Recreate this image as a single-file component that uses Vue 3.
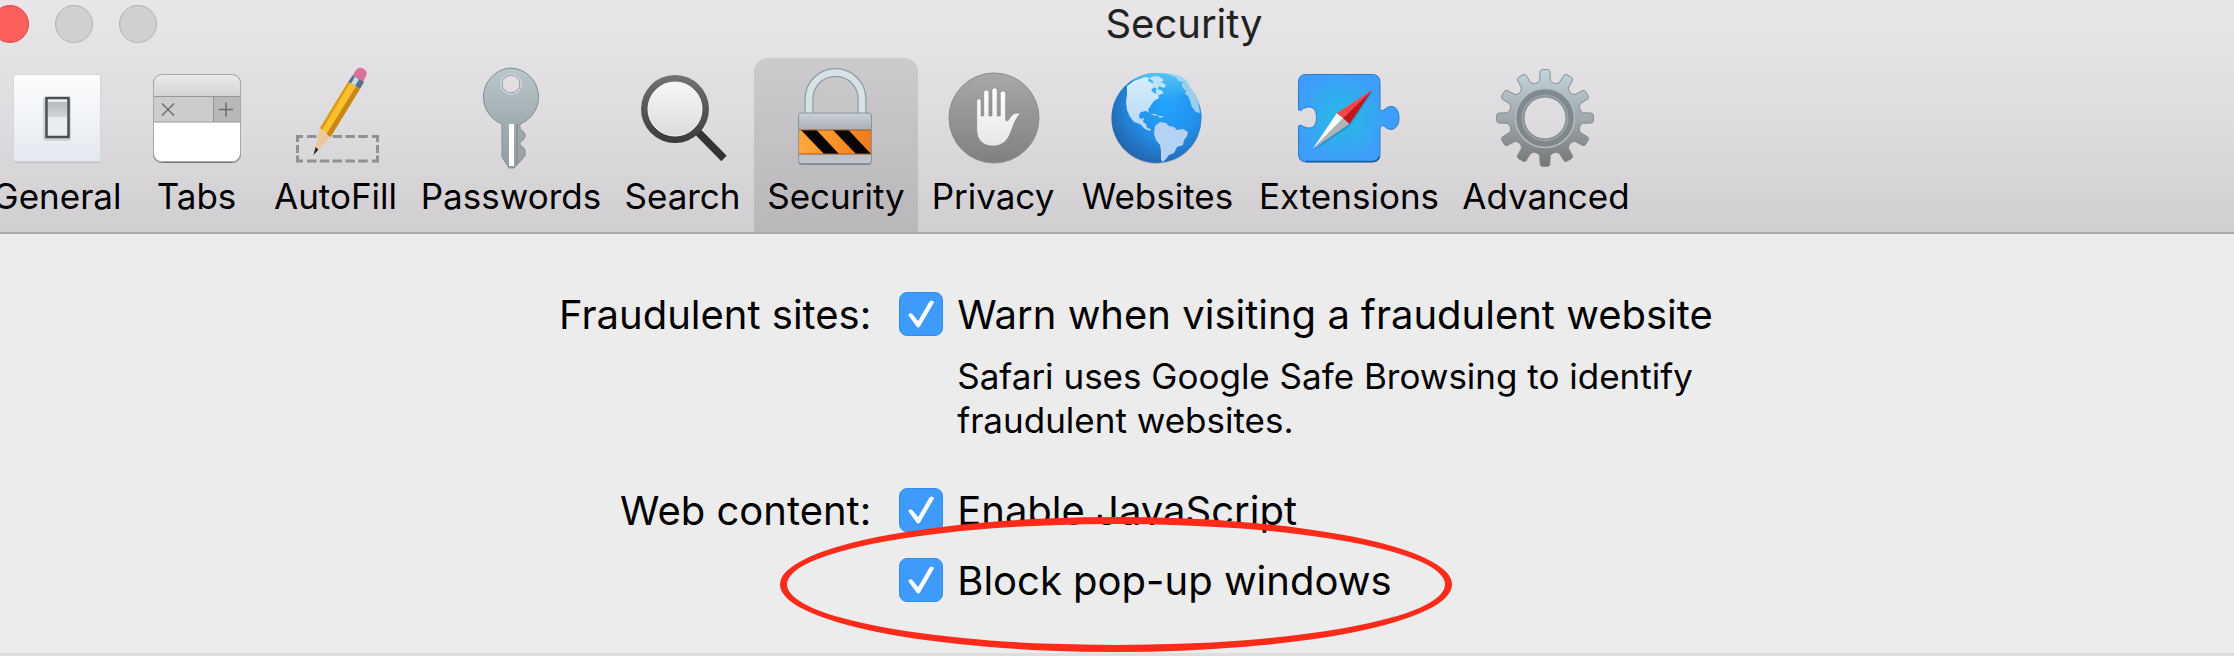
<template>
  <div class="screen">
    <div class="window">
      <header class="header">
        <div class="title-bar">
          <div class="lights">
            <button class="light close" aria-label="Close"></button>
            <button class="light" aria-label="Minimize"></button>
            <button class="light" aria-label="Zoom"></button>
          </div>
          <h1 class="title">{{ current }}</h1>
          <div></div>
        </div>

        <nav class="toolbar">
          <button
            v-for="tab in tabs"
            :key="tab"
            class="tab"
            :class="{ active: tab === current }"
            @click="current = tab"
          >
            <svg v-if="tab === 'General'" class="icon" viewBox="0 0 104 104">
              <defs>
                <linearGradient id="plate" x1="0" y1="0" x2="0" y2="1">
                  <stop offset="0" stop-color="#fdfdfe" />
                  <stop offset="1" stop-color="#e4e9ef" />
                </linearGradient>
                <linearGradient id="rocker" x1="0" y1="0" x2="0" y2="1">
                  <stop offset="0" stop-color="#b5b8bb" />
                  <stop offset="1" stop-color="#d3d6d9" />
                </linearGradient>
              </defs>
              <rect x="8.5" y="9.5" width="87" height="87" rx="2" fill="#a9abae" />
              <rect x="8.5" y="8.5" width="87" height="87" rx="2" fill="url(#plate)" stroke="#d5d6d9" />
              <rect x="38" y="31" width="28" height="44" rx="3" fill="#cfd3d7" />
              <rect x="41.5" y="32" width="22" height="39" fill="#e8edf1" stroke="#4b4e52" stroke-width="2.5" />
              <rect x="43" y="36" width="19" height="15" fill="url(#rocker)" />
            </svg>

            <svg v-else-if="tab === 'Tabs'" class="icon" viewBox="0 0 104 104">
              <defs>
                <linearGradient id="tabTop" x1="0" y1="0" x2="0" y2="1">
                  <stop offset="0" stop-color="#ebe9eb" />
                  <stop offset="1" stop-color="#d5d2d5" />
                </linearGradient>
              </defs>
              <rect x="8.5" y="9.5" width="87" height="87" rx="8" fill="#fff" stroke="#777" />
              <path d="M9 31V17q0-8 8-8h70q8 0 8 8v14z" fill="url(#tabTop)" />
              <path d="M9 31h60v25H9z" fill="#cecbce" />
              <path d="M68 31h27v25H68z" fill="#bab7ba" />
              <path d="M8 30.5h88M8 56h88M68.5 31v25" fill="none" stroke="#989598" />
              <rect x="8.5" y="8.5" width="87" height="87" rx="8" fill="none" stroke="#a9a7a9" />
              <path d="M17 37.5l12 12M29 37.5l-12 12M74 43.5h14M81 36.5v14" fill="none" stroke="#6e6c6e" stroke-width="1.5" />
            </svg>

            <svg v-else-if="tab === 'AutoFill'" class="icon" viewBox="0 0 104 104">
              <g fill="none" stroke="#929092" stroke-width="3">
                <path d="M19 70.5h-5.5V76M88 70.5h5.5V76M19 95h-5.5v-5.5M88 95h5.5v-5.5M13.5 79v8M93.5 79v8" />
                <path d="M23 70.5h61M23 95h61" stroke-dasharray="9.5 3.3" />
              </g>
              <path d="M69 9l3-5q3-4 8-1 4 3 2 7l-3 6z" fill="#dd6f9b" />
              <path d="M69 9l11 7-4 7-12-7z" fill="#55708a" />
              <path d="M71 10.5l4 3-4 6.5-4-2.5z" fill="#cdd5dc" />
              <path d="M64 16l12 7-29.5 48L36 62z" fill="#fcc02e" />
              <path d="M72 20.5l4 2.5-29.5 48-4-3z" fill="#c68819" />
              <path d="M64 16l2 1-28 47-2-2z" fill="#d99a1c" />
              <path d="M36 62q2 5 5 3 1 4 5.500 6L30 88z" fill="#ecc79b" />
              <path d="M31.500 81l3 2.800L29.500 89z" fill="#2b2928" />
            </svg>

            <svg v-else-if="tab === 'Passwords'" class="icon" viewBox="0 0 104 104">
              <defs>
                <linearGradient id="keyFill" x1="0" y1="0" x2="0" y2="1">
                  <stop offset="0" stop-color="#bac7cb" />
                  <stop offset=".5" stop-color="#a3afb3" />
                  <stop offset="1" stop-color="#969ea2" />
                </linearGradient>
              </defs>
              <path
                d="M52 2a29 29 0 0 1 9 56v5q6 4 5 8-1 3-5 5v3q6 4 5 7v4L55 102h-5l-7-11V58A29 29 0 0 1 52 2zm0 7a9 9 0 0 0 0 18 9 9 0 0 0 0-18z"
                fill="url(#keyFill)" stroke="#858c90" fill-rule="evenodd"
              />
              <path d="M50 58h5v42h-5z" fill="#fff" />
              <path d="M57 58h2v38l-2 3z" fill="#8b9397" />
              <circle cx="52" cy="18" r="10" fill="none" stroke="#cbd5d8" stroke-width="1.5" />
            </svg>

            <svg v-else-if="tab === 'Search'" class="icon" viewBox="0 0 104 104">
              <defs>
                <linearGradient id="lensRing" x1="0" y1="0" x2="0" y2="1">
                  <stop offset="0" stop-color="#737373" />
                  <stop offset="1" stop-color="#3a3a3a" />
                </linearGradient>
                <linearGradient id="lens" x1="0" y1="0" x2="0" y2="1">
                  <stop offset="0" stop-color="#f7f7f7" />
                  <stop offset="1" stop-color="#dcdcdc" />
                </linearGradient>
              </defs>
              <path d="M65 64l28 28.5" stroke="#333" stroke-width="7.5" />
              <circle cx="44" cy="43" r="34" fill="url(#lensRing)" />
              <circle cx="44" cy="43" r="27" fill="url(#lens)" stroke="#fafafa" />
            </svg>

            <svg v-else-if="tab === 'Security'" class="icon" viewBox="0 0 104 104">
              <defs>
                <linearGradient id="lockBody" x1="0" y1="0" x2="0" y2="1">
                  <stop offset="0" stop-color="#ccd1d5" />
                  <stop offset=".3" stop-color="#abb2b8" />
                  <stop offset="1" stop-color="#c3c6ca" />
                </linearGradient>
                <linearGradient id="hazard" x1="0" y1="0" x2="1" y2="0">
                  <stop offset="0" stop-color="#ffa83d" />
                  <stop offset=".5" stop-color="#fb9128" />
                  <stop offset="1" stop-color="#ee7a1d" />
                </linearGradient>
              </defs>
              <path d="M25 47V33a26.5 26.5 0 0 1 53 0v14" fill="none" stroke="#8e9ca9" stroke-width="9" />
              <path d="M25 47V33a26.5 26.5 0 0 1 53 0v14" fill="none" stroke="#d7e2e5" stroke-width="6.5" />
              <rect x="14.5" y="48" width="73" height="51" rx="3" fill="#838a94" />
              <rect x="14.5" y="47" width="73" height="50.5" rx="3" fill="url(#lockBody)" stroke="#8793a3" />
              <path d="M15 64h72v24H15z" fill="url(#hazard)" />
              <path d="M17 64h15.5L55 88H40zM49 64h15.5L87 88H72z" fill="#060504" />
              <path d="M15 64h72M15 88h72" stroke="#a65420" />
            </svg>

            <svg v-else-if="tab === 'Privacy'" class="icon" viewBox="0 0 104 104">
              <defs>
                <linearGradient id="disc" x1="0" y1="0" x2="0" y2="1">
                  <stop offset="0" stop-color="#a9a8a9" />
                  <stop offset="1" stop-color="#818081" />
                </linearGradient>
                <linearGradient id="palm" x1="0" y1="0" x2="0" y2="1">
                  <stop offset="0" stop-color="#fff" />
                  <stop offset="1" stop-color="#e6e6e6" />
                </linearGradient>
              </defs>
              <circle cx="53" cy="52" r="45" fill="url(#disc)" stroke="#8c8b8c" />
              <path
                d="M35.7 35a2.2 2.2 0 0 1 4.4 0v15h2.6V26.6a2.6 2.6 0 0 1 5.2 0V50H51V24.5a2.6 2.6 0 0 1 5.2 0V50h3.1V27.6a2.6 2.6 0 0 1 5.3 0V54q1 2 3 0c3-5 5-7 10-7q2 0 .6 1.6C74 54 73 58 70.5 64 67 75 61 80 52 80c-10 0-16.3-6-16.3-17z"
                fill="url(#palm)" stroke="#777" stroke-width=".5"
              />
            </svg>

            <svg v-else-if="tab === 'Websites'" class="icon" viewBox="0 0 104 104">
              <defs>
                <radialGradient id="ocean" cx=".62" cy=".35" r=".7">
                  <stop offset="0" stop-color="#23a5fb" />
                  <stop offset=".5" stop-color="#2491ee" />
                  <stop offset="1" stop-color="#2264ab" />
                </radialGradient>
                <linearGradient id="land" x1="0" y1="0" x2="0" y2="1">
                  <stop offset="0" stop-color="#d7eefb" />
                  <stop offset="1" stop-color="#b4d6f5" />
                </linearGradient>
                <linearGradient id="shine" x1="0" y1="0" x2="0" y2="1">
                  <stop offset="0" stop-color="#5fd3f7" stop-opacity=".8" />
                  <stop offset="1" stop-color="#5fd3f7" stop-opacity="0" />
                </linearGradient>
              </defs>
              <circle cx="50.5" cy="53" r="45" fill="#8f9499" opacity=".5" />
              <circle cx="50.5" cy="52" r="45" fill="url(#ocean)" />
              <ellipse cx="54" cy="21" rx="30" ry="14" fill="url(#shine)" />
              <!-- North and Central America -->
              <path
                d="M21 20l7-5 6-2 5-2 4 1-1 3 4 2 2 4-3 3 3 3 4 1 1 4-5 3-3 4-3 5 1 3-3-2-5 1-2 3 1 4 4-1-1 4 3 2 1 4 4 1-1 2-5-2-5-5-6-2-4-5-3-7-1-8 1-7z"
                fill="url(#land)"
              />
              <path d="M43 12l6-2 5 1 4 3-3 2 5 3-2 3-5-2-1 3-5-2-2-3 3-2zM50 23l5 1 3 3-5 2-3-2z" fill="#bfe4fa" />
              <path d="M44 48l5 0 4 2-4-.5zM53 50h4v1.5h-4z" fill="#b9d9f6" />
              <path d="M49 60l5-4 6 1 3 3 5 1 3 3 6-1 5 3-1 4-3 4-1 5-6 2-3 6-5 2-3 4-3 3-2-2 0-9-1-6-4-5-2-6z" fill="#b4d3f4" />
              <!-- Africa and Europe at the rim -->
              <path d="M76 16l5 3 6 6 5 9 2 13-4-1-4-5-2-6-2-5-3-2 1-3-4-4z" fill="#9bcdec" />
              <path d="M69 11l6 2 3 3-5-1z" fill="#9bdcf5" />
            </svg>

            <svg v-else-if="tab === 'Extensions'" class="icon" viewBox="0 0 104 104">
              <defs>
                <radialGradient id="puzzle" gradientUnits="userSpaceOnUse" cx="45" cy="52" r="46">
                  <stop offset="0" stop-color="#24bce2" />
                  <stop offset="1" stop-color="#3e9dfb" />
                </radialGradient>
              </defs>
              <path
                d="M9 8.5h66q8 0 8 8V43q1 3 4 1c2-2 3-3 7-3.5 6 0 8 6 8 11.5s-2 11-8 11.5c-4-.5-5-2-7-3.5q-3-2-4 2v26q0 8-8 8H9q-7.5 0-7.5-8V60q2-2 5 .5c8 4 13 0 13-9s-5-13-13-9q-3 3-5 1.5V16q0-7.5 7.5-7.5z"
                fill="url(#puzzle)" stroke="#2d7ccb"
              />
              <path d="M9 95.5h66q6 0 7.5-5" fill="none" stroke="#1b5c9e" stroke-width="1.5" />
              <path d="M76 25L53 60 16 85l29-27z" fill="#176ea9" opacity=".4" />
              <path d="M75.3 24L39.7 47.3l6.3 5z" fill="#fc4546" />
              <path d="M75.3 24L52.3 58 46 52.3z" fill="#c9121a" />
              <path d="M15.7 83l24-35.7 6.3 5z" fill="#fff" />
              <path d="M15.7 83l36.6-25-6.3-5.7z" fill="#b3b3b3" />
            </svg>

            <svg v-else class="icon" viewBox="0 0 104 104">
              <defs>
                <linearGradient id="steel" x1="0" y1="0" x2="0" y2="1">
                  <stop offset="0" stop-color="#c3d5dc" />
                  <stop offset=".5" stop-color="#a0a9ac" />
                  <stop offset="1" stop-color="#747575" />
                </linearGradient>
                <linearGradient id="collar" x1="0" y1="0" x2="0" y2="1">
                  <stop offset="0" stop-color="#7c8b91" />
                  <stop offset="1" stop-color="#838686" />
                </linearGradient>
              </defs>
              <path :d="gearPath" fill="url(#steel)" stroke="#868e91" stroke-linejoin="round" fill-rule="evenodd" />
              <circle cx="51" cy="52" r="25" fill="none" stroke="url(#collar)" stroke-width="8" />
              <circle cx="51" cy="52" r="29.5" fill="none" stroke="#b3bdc0" stroke-width="1.5" />
              <circle cx="51" cy="52" r="22.5" fill="none" stroke="#98a0a3" stroke-width="2" />
            </svg>
            <span class="tab-label">{{ tab }}</span>
          </button>
        </nav>
      </header>

      <main class="settings">
        <div class="group-label">Fraudulent sites:</div>
        <div class="group">
          <label class="option">
            <input v-model="warnFraud" type="checkbox" class="check" />
            <span>Warn when visiting a fraudulent website</span>
          </label>
          <p class="hint">Safari uses Google Safe Browsing to identify fraudulent websites.</p>
        </div>

        <div class="group-label">Web content:</div>
        <div class="group">
          <label class="option">
            <input v-model="javaScript" type="checkbox" class="check" />
            <span>Enable JavaScript</span>
          </label>
          <label class="option marked">
            <input v-model="blockPopups" type="checkbox" class="check" />
            <span>Block pop-up windows</span>
            <span class="ring"></span>
          </label>
        </div>
      </main>
    </div>
  </div>
</template>

<script setup>
import { ref } from 'vue'

const tabs = [
  'General',
  'Tabs',
  'AutoFill',
  'Passwords',
  'Search',
  'Security',
  'Privacy',
  'Websites',
  'Extensions',
  'Advanced',
]
const current = ref('Security')

const warnFraud = ref(true)
const javaScript = ref(true)
const blockPopups = ref(true)

// 12 teeth around (51, 52), with a round hole in the middle
function buildGear() {
  const point = (r, deg) => {
    const a = (deg * Math.PI) / 180
    return `${(51 + r * Math.sin(a)).toFixed(1)} ${(52 - r * Math.cos(a)).toFixed(1)}`
  }
  let d = ''
  for (let i = 0; i < 12; i++) {
    const c = i * 30
    d += `${i ? 'L' : 'M'}${point(38, c - 8)}L${point(47, c - 6)}Q${point(48.5, c - 5)} ${point(48.5, c - 3)}`
    d += `L${point(48.5, c + 3)}Q${point(48.5, c + 5)} ${point(47, c + 6)}L${point(38, c + 8)}`
    d += `Q${point(34, c + 15)} ${point(38, c + 22)}`
  }
  return d + 'ZM51 31a21 21 0 0 0 0 42 21 21 0 0 0 0-42Z'
}
const gearPath = buildGear()
</script>

<style>
body { margin: 0; background: #ececec; }
</style>

<style scoped>
.screen { overflow: hidden; }
/* the window runs past both sides of the screen */
.window {
  margin: 0 -153px 0 -19px;
  background: #ececec;
  color: #000;
  font-family: Inter, "Liberation Sans", sans-serif;
  border-bottom: 3px solid #dedede;
}

.header {
  background: linear-gradient(#e8e6e8, #dddbdd 55%, #d0ced0);
  border-bottom: 2px solid #aeabae;
}
.title-bar {
  display: grid; grid-template-columns: 1fr auto 1fr;
  padding-bottom: 10px;
}
.lights { display: flex; align-items: center; gap: 26px; padding-left: 10px; }
.light {
  width: 38px; height: 38px; padding: 0;
  border: 1px solid #b3b2b3; border-radius: 50%;
  background: #d0d0d0;
}
.close { background: #fc605c; border-color: #e2453f; }
.title { margin: 0; font-size: 40px; font-weight: 400; line-height: 48px; color: #222; }

.toolbar {
  display: grid;
  grid-template-columns: 152px 127px 151px 200px 143px 164px 150px 179px 204px 190px;
}
.tab {
  display: flex; flex-direction: column; align-items: center; gap: 4px;
  padding: 8px 0 14px;
  border: none; border-radius: 14px 14px 0 0;
  background: none; color: #000;
  font-family: inherit; font-size: 35px; line-height: 44px;
}
.tab.active { background: linear-gradient(#cccacc, #b9b7b9); }
.icon { width: 104px; height: 104px; overflow: visible; }
.tab-label { white-space: nowrap; }

.settings {
  display: grid; grid-template-columns: 37% 1fr;
  column-gap: 28px; row-gap: 46px;
  padding: 58px 0 49px;
  font-size: 40px; line-height: 46px;
}
.group-label { text-align: right; }
.group { display: flex; flex-direction: column; align-items: flex-start; }
.option { display: flex; gap: 14px; }
.option.marked { position: relative; margin-top: 24px; }
.hint {
  margin: 16px 0 0 58px; max-width: 760px;
  font-size: 35px; line-height: 44px;
}
.check {
  appearance: none;
  display: grid; place-items: center;
  width: 44px; height: 44px; margin: 0;
  border: 1px solid #9a9a9a; border-radius: 8px;
  background: #fff;
}
.check:checked { background: #3f9bfb; border-color: #2f8df0; }
.check:checked::before {
  content: "";
  width: 28px; height: 28px;
  background: #fff;
  clip-path: path("M1 15 Q3 12 5 14 L11 21 L22 2 Q24 -1 27 2 L13 26 Q11 29 9 26 Z");
}
.ring {
  position: absolute; left: -119px; top: -41px;
  box-sizing: border-box; width: 672px; height: 135px;
  border: 7px solid #fe2a1a; border-radius: 50%;
  pointer-events: none;
}
</style>
